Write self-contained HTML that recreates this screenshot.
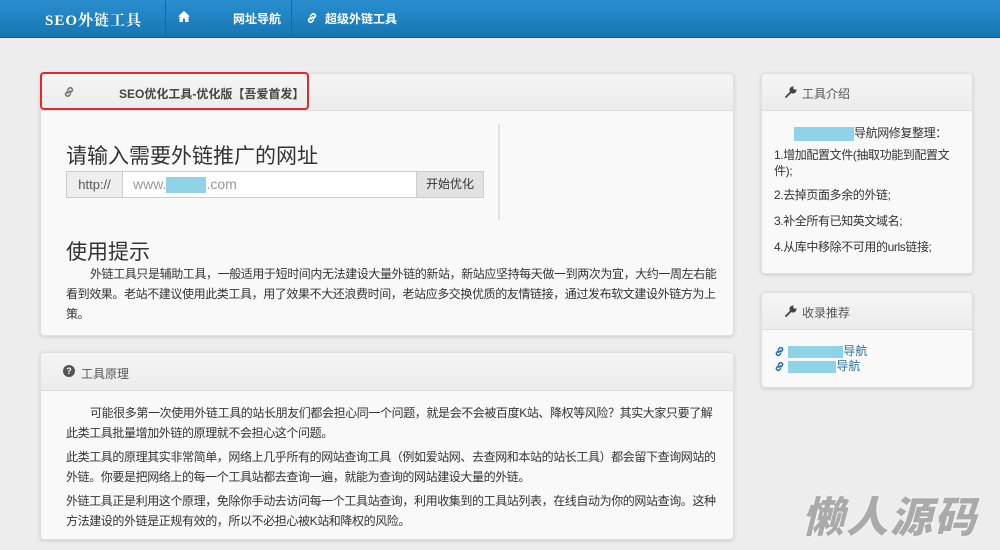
<!DOCTYPE html>
<html><head><meta charset="utf-8"><style>
*{margin:0;padding:0;box-sizing:border-box}
body{width:1000px;height:550px;overflow:hidden;background:#ededed;font-family:"Liberation Sans","Noto Sans CJK SC",sans-serif;color:#333;font-size:12px;position:relative}
.nav{position:absolute;left:0;top:0;width:1000px;height:38px;background:linear-gradient(#2a8fcf,#1676b4);border-bottom:1px solid #0f5f94}
.nav .brand{position:absolute;left:45px;top:9px;color:#fff;font:bold 15px "Liberation Serif","Noto Serif CJK SC",serif;letter-spacing:1px}
.nav .sep{position:absolute;top:0;width:1px;height:38px;background:#0f6aa6}
.nav .it{position:absolute;top:10px;color:#fff;font-weight:bold;font-size:12px}
.blue{display:inline-block;background:#8fd3e8;vertical-align:middle}
.panel{position:absolute;background:#f9f9f9;border:1px solid #e0e0e0;border-radius:4px;box-shadow:0 1px 3px rgba(0,0,0,.15)}
.ph{height:37px;background:linear-gradient(#f5f5f5,#ececec);border-bottom:1px solid #ddd;border-radius:4px 4px 0 0;position:relative;font-size:12px;color:#555}
p{line-height:20px;letter-spacing:-0.4px}
</style></head><body>
<svg width="0" height="0" style="position:absolute"><defs>
<symbol id="lk" viewBox="0 0 12 12"><g fill="none" stroke="currentColor" stroke-width="1.6" stroke-linecap="round"><path d="M5 7L7 5"/><path d="M4.5 5.5L3 7a2 2 0 0 0 2.8 2.8L7.3 8.3"/><path d="M7.5 6.5L9 5A2 2 0 0 0 6.2 2.2L4.7 3.7"/></g></symbol>
<symbol id="wr" viewBox="0 0 12 12"><path d="M1 11l5-5M7.5 1.5a2.6 2.6 0 1 0 3 3l-1.2.3-2.1-2.1z" fill="currentColor" stroke="currentColor" stroke-width="1.8" stroke-linecap="round"/></symbol>
</defs></svg>
<div class="nav">
 <div class="brand">SEO外链工具</div>
 <div class="sep" style="left:165px"></div>
 <svg style="position:absolute;left:178px;top:11px" width="12" height="11" viewBox="0 0 12 11"><path d="M6 0L0 5.5h1.5V11h3.5V7.5h2V11h3.5V5.5H12z" fill="#fff"/></svg>
 <div class="it" style="left:233px">网址导航</div>
 <div class="sep" style="left:291px"></div>
 <svg style="position:absolute;left:306px;top:12px;color:#fff" width="12" height="12"><use href="#lk"/></svg>
 <div class="it" style="left:325px">超级外链工具</div>
</div>

<div class="panel" style="left:40px;top:73px;width:694px;height:263px">
 <div class="ph"><svg style="position:absolute;left:22px;top:12px;color:#777" width="12" height="12"><use href="#lk"/></svg><b style="position:absolute;left:78px;top:11px;color:#444">SEO优化工具-优化版【吾爱首发】</b></div>
 <div style="position:absolute;left:0;top:0;width:269px;height:38px;border:2px solid #e02a2a;border-radius:4px;margin:-2px 0 0 -1px"></div>
 <div style="position:absolute;left:457px;top:50px;width:2px;height:96px;background:#e2e2e2"></div>
 <div style="position:absolute;left:25px;top:66px;font-size:21px;color:#333">请输入需要外链推广的网址</div>
 <div style="position:absolute;left:25px;top:97px;width:418px;height:27px;border:1px solid #ccc;background:#fff;display:flex">
  <div style="width:56px;background:#eee;border-right:1px solid #ccc;text-align:center;line-height:25px;color:#555;font-size:13px">http://</div>
  <div style="flex:1;padding-left:10px;line-height:25px;color:#999;font-size:14px">www.<span class="blue" style="width:40px;height:16px"></span>.com</div>
  <div style="width:67px;background:#e2e2e2;border-left:1px solid #ccc;text-align:center;line-height:25px;color:#333">开始优化</div>
 </div>
 <div style="position:absolute;left:25px;top:162px;font-size:21px">使用提示</div>
 <p style="position:absolute;left:25px;top:190px;width:655px;text-indent:24px">外链工具只是辅助工具，一般适用于短时间内无法建设大量外链的新站，新站应坚持每天做一到两次为宜，大约一周左右能看到效果。老站不建议使用此类工具，用了效果不大还浪费时间，老站应多交换优质的友情链接，通过发布软文建设外链方为上策。</p>
</div>

<div class="panel" style="left:40px;top:352px;width:694px;height:188px">
 <div class="ph" style="height:38px"><span style="position:absolute;left:22px;top:12px;width:12px;height:12px;border-radius:50%;background:#555;color:#fff;font-size:9px;text-align:center;line-height:12px;font-weight:bold">?</span><span style="position:absolute;left:40px;top:12px">工具原理</span></div>
 <div style="padding:12px 12px 0 25px">
  <p style="text-indent:24px;margin-bottom:4px">可能很多第一次使用外链工具的站长朋友们都会担心同一个问题，就是会不会被百度K站、降权等风险？其实大家只要了解此类工具批量增加外链的原理就不会担心这个问题。</p>
  <p style="margin-bottom:4px">此类工具的原理其实非常简单，网络上几乎所有的网站查询工具（例如爱站网、去查网和本站的站长工具）都会留下查询网站的外链。你要是把网络上的每一个工具站都去查询一遍，就能为查询的网站建设大量的外链。</p>
  <p>外链工具正是利用这个原理，免除你手动去访问每一个工具站查询，利用收集到的工具站列表，在线自动为你的网站查询。这种方法建设的外链是正规有效的，所以不必担心被K站和降权的风险。</p>
 </div>
</div>

<div class="panel" style="left:761px;top:73px;width:212px;height:201px">
 <div class="ph"><svg style="position:absolute;left:23px;top:12px;color:#444" width="12" height="12"><use href="#wr"/></svg><span style="position:absolute;left:40px;top:11px">工具介绍</span></div>
 <div style="padding:12px 12px 0 12px;font-size:12px">
  <p style="padding-left:20px"><span class="blue" style="width:60px;height:14px"></span>导航网修复整理：</p>
  <p style="margin-top:4px;line-height:16px">1.增加配置文件(抽取功能到配置文件);</p>
  <p style="margin-top:6px">2.去掉页面多余的外链;</p>
  <p style="margin-top:6px">3.补全所有已知英文域名;</p>
  <p style="margin-top:6px">4.从库中移除不可用的urls链接;</p>
 </div>
</div>

<div class="panel" style="left:761px;top:292px;width:212px;height:96px">
 <div class="ph"><svg style="position:absolute;left:23px;top:12px;color:#444" width="12" height="12"><use href="#wr"/></svg><span style="position:absolute;left:40px;top:11px">收录推荐</span></div>
 <div style="padding:14px 12px 0 12px;color:#2a6fa8;line-height:15px">
  <div><svg width="11" height="11" style="vertical-align:middle;color:#2a6fa8"><use href="#lk"/></svg> <span class="blue" style="width:55px;height:12px"></span>导航</div>
  <div><svg width="11" height="11" style="vertical-align:middle;color:#2a6fa8"><use href="#lk"/></svg> <span class="blue" style="width:48px;height:12px"></span>导航</div>
 </div>
</div>

<div style="position:absolute;left:802px;top:490px;font-size:42px;line-height:50px;font-weight:900;font-style:italic;color:#aaa;letter-spacing:2px;font-family:'Noto Sans CJK SC',sans-serif;text-shadow:0 0 2px #fff">懒人源码</div>
</body></html>
